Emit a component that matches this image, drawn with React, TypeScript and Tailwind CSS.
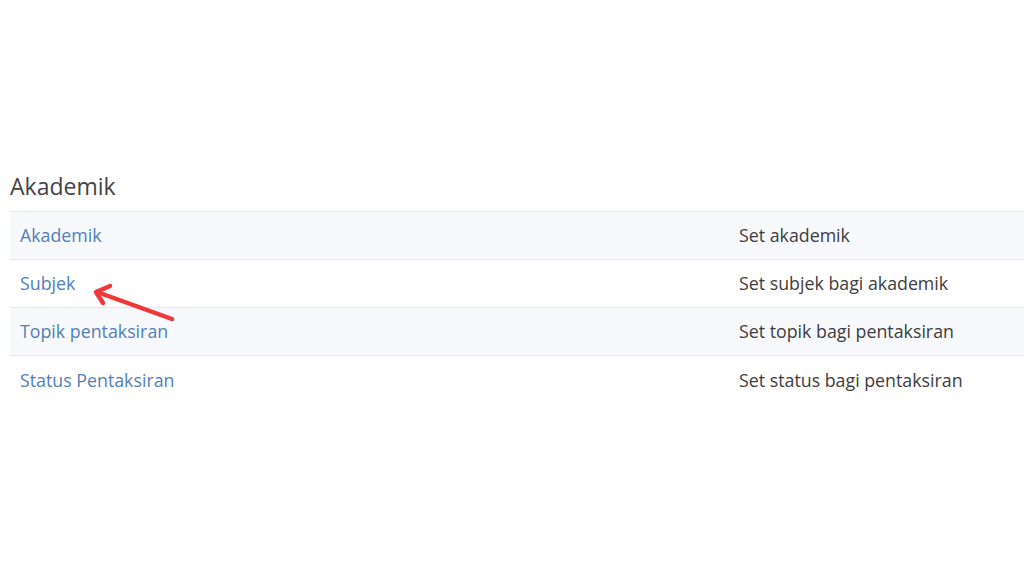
import React from "react";

const rows = [
  ["Akademik", "Set akademik"],
  ["Subjek", "Set subjek bagi akademik"],
  ["Topik pentaksiran", "Set topik bagi pentaksiran"],
  ["Status Pentaksiran", "Set status bagi pentaksiran"],
];

export default function App() {
  return (
    <div className="relative w-[1024px] h-[576px] bg-white overflow-hidden" style={{ fontFamily: '"Open Sans", sans-serif' }}>
      <div className="pt-[170px] pl-[10px]">
        <h2 className="text-[23px] leading-[32px] text-[#444] mb-[9px]">Akademik</h2>
        <div className="border-t border-[#e3e7ee]">
          {rows.map(([a, b], i) => (
            <div
              key={a}
              className={`grid grid-cols-[719px_1fr] h-[48px] items-center border-b border-[#e3e7ee] last:border-b-0 text-[17.8px] ${i % 2 === 0 ? "bg-[#f8f9fc]" : "bg-white"}`}
            >
              <div className="pl-[10px] text-[#5080bc]">{a}</div>
              <div className="pl-[10px] text-[#3d3d3d]">{b}</div>
            </div>
          ))}
        </div>
      </div>
      <svg className="absolute left-0 top-0" width="1024" height="576" viewBox="0 0 1024 576">
        <g stroke="#f0383a" strokeWidth="4.5" strokeLinecap="round" strokeLinejoin="round" fill="none">
          <line x1="172" y1="319" x2="97" y2="292" />
          <polyline points="110,286 96,292 103,303" />
        </g>
      </svg>
    </div>
  );
}
